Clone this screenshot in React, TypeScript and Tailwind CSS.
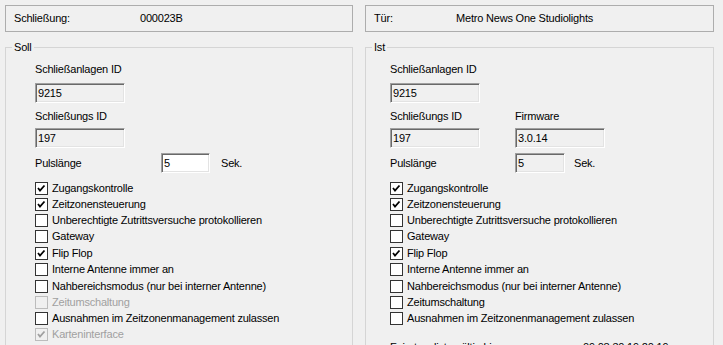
import React from "react";

type Opt = { label: string; checked?: boolean; disabled?: boolean };

const sollOpts: Opt[] = [
  { label: "Zugangskontrolle", checked: true },
  { label: "Zeitzonensteuerung", checked: true },
  { label: "Unberechtigte Zutrittsversuche protokollieren" },
  { label: "Gateway" },
  { label: "Flip Flop", checked: true },
  { label: "Interne Antenne immer an" },
  { label: "Nahbereichsmodus (nur bei interner Antenne)" },
  { label: "Zeitumschaltung", disabled: true },
  { label: "Ausnahmen im Zeitzonenmanagement zulassen" },
  { label: "Karteninterface", checked: true, disabled: true },
];

const istOpts: Opt[] = [
  { label: "Zugangskontrolle", checked: true },
  { label: "Zeitzonensteuerung", checked: true },
  { label: "Unberechtigte Zutrittsversuche protokollieren" },
  { label: "Gateway" },
  { label: "Flip Flop", checked: true },
  { label: "Interne Antenne immer an" },
  { label: "Nahbereichsmodus (nur bei interner Antenne)" },
  { label: "Zeitumschaltung" },
  { label: "Ausnahmen im Zeitzonenmanagement zulassen" },
];

function TextBox({ value, w = "w-[90px]", white = false }: { value: string; w?: string; white?: boolean }) {
  return (
    <div
      className={`${w} h-[20px] shrink-0 flex items-center pl-[1px] border border-t-[#a0a0a0] border-l-[#a0a0a0] border-r-white border-b-white shadow-[inset_1px_1px_0_#696969,inset_-1px_-1px_0_#e3e3e3] ${
        white ? "bg-white" : "bg-[#f0f0f0]"
      }`}
    >
      <span className="pl-[1px] leading-[13px]">{value}</span>
    </div>
  );
}

function Check({ checked, disabled }: { checked?: boolean; disabled?: boolean }) {
  return (
    <div
      className={`w-[13px] h-[13px] shrink-0 border flex items-center justify-center ${
        disabled ? "border-[#bcbcbc] bg-[#f0f0f0]" : "border-[#333333] bg-white"
      }`}
    >
      {checked && (
        <svg width="11" height="11" viewBox="0 0 11 11">
          <polyline
            points="2,5 4,7.5 8.5,2.5"
            fill="none"
            stroke={disabled ? "#a0a0a0" : "#000"}
            strokeWidth="1.8"
          />
        </svg>
      )}
    </div>
  );
}

function CheckList({ opts }: { opts: Opt[] }) {
  return (
    <div className="flex flex-col mt-[7px]">
      {opts.map((o, i) => (
        <div key={i} className={`flex items-center h-[16px] ${i === 4 || i === 6 ? "mt-[1px]" : ""}`}>
          <Check checked={o.checked} disabled={o.disabled} />
          <span className={`ml-[4px] leading-[13px] whitespace-nowrap ${o.disabled ? "text-[#a0a0a0]" : ""}`}>
            {o.label}
          </span>
        </div>
      ))}
    </div>
  );
}

function HeaderBox({ label, value, labelW }: { label: string; value: string; labelW: string }) {
  return (
    <div className="h-[27px] shrink-0 border border-[#adadad] flex items-center pl-[8px]">
      <span className={labelW}>{label}</span>
      <span>{value}</span>
    </div>
  );
}

function Group({ title, pl, children }: { title: string; pl: string; children: React.ReactNode }) {
  return (
    <fieldset className="mt-[9px] h-[400px] shrink-0 border border-[#d5d5d5]">
      <legend className="ml-[6px] px-[2px] leading-[13px]">{title}</legend>
      <div className={pl}>{children}</div>
    </fieldset>
  );
}

export default function App() {
  return (
    <div className="w-[723px] h-[345px] overflow-hidden bg-[#f0f0f0] text-black text-[11px] tracking-[-0.2px] font-['Liberation_Sans',Arial,sans-serif] flex gap-[12px] pl-[5px] pt-[5px]">
      {/* Soll */}
      <div className="w-[348px] flex flex-col">
        <HeaderBox label="Schließung:" value="000023B" labelW="w-[126px]" />
        <Group title="Soll" pl="pl-[29px]">
          <div className="mt-[9px] leading-[13px]">Schließanlagen ID</div>
          <div className="mt-[7px]">
            <TextBox value="9215" />
          </div>
          <div className="mt-[7px] leading-[13px]">Schließungs ID</div>
          <div className="mt-[5px]">
            <TextBox value="197" />
          </div>
          <div className="mt-[5px] flex items-center h-[20px]">
            <span className="w-[126px]">Pulslänge</span>
            <TextBox value="5" w="w-[49px]" white />
            <span className="ml-[11px]">Sek.</span>
          </div>
          <CheckList opts={sollOpts} />
        </Group>
      </div>

      {/* Ist */}
      <div className="w-[349px] flex flex-col">
        <HeaderBox label="Tür:" value="Metro News One Studiolights" labelW="w-[82px]" />
        <Group title="Ist" pl="pl-[24px]">
          <div className="mt-[9px] leading-[13px]">Schließanlagen ID</div>
          <div className="mt-[7px]">
            <TextBox value="9215" />
          </div>
          <div className="mt-[7px] flex leading-[13px]">
            <span className="w-[125px]">Schließungs ID</span>
            <span>Firmware</span>
          </div>
          <div className="mt-[5px] flex">
            <div className="w-[125px]">
              <TextBox value="197" />
            </div>
            <TextBox value="3.0.14" />
          </div>
          <div className="mt-[5px] flex items-center h-[20px]">
            <span className="w-[125px]">Pulslänge</span>
            <TextBox value="5" w="w-[50px]" />
            <span className="ml-[9px]">Sek.</span>
          </div>
          <CheckList opts={istOpts} />
          <div className="mt-[15px] flex leading-[13px]">
            <span className="w-[193px]">Feiertagsliste gültig bis</span>
            <span>09.08.30 19:20:19</span>
          </div>
        </Group>
      </div>
    </div>
  );
}
